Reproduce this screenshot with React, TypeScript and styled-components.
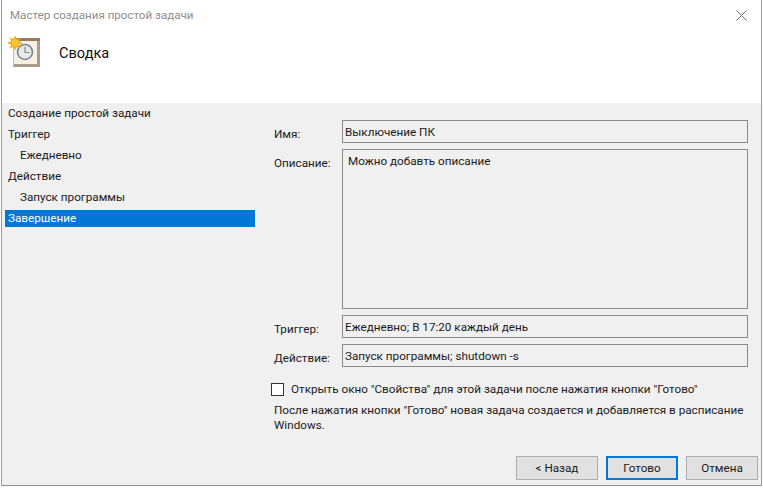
import React from 'react'
import styled, { createGlobalStyle } from 'styled-components'

const GlobalStyle = createGlobalStyle`
  html, body {
    margin: 0;
    padding: 0;
    background: #ffffff;
  }
  body {
    font-family: Roboto, 'Noto Sans', sans-serif;
    font-size: 11.7px;
    color: #1a1a1a;
  }
`

const Page = styled.div`
  width: 763px;
  height: 489px;
  overflow: hidden;
  background: #ffffff;
`

const Window = styled.div`
  width: 761px;
  height: 486px;
  margin-left: 1px;
  box-sizing: border-box;
  border-left: 1px solid #9a9a9a;
  border-right: 1px solid #a0a0a0;
  border-bottom: 1px solid #8f8f8f;
  display: flex;
  flex-direction: column;
`

const TitleBar = styled.div`
  height: 30px;
  padding: 0 14px 0 8px;
  display: flex;
  align-items: center;
  justify-content: space-between;
  flex-shrink: 0;
`

const TitleText = styled.span`
  color: #8e8e8e;
  font-size: 11.6px;
`

const Header = styled.div`
  height: 73px;
  flex-shrink: 0;
  display: flex;
  align-items: flex-start;
  padding: 6px 0 0 6px;
  box-sizing: border-box;
  gap: 18px;
`

const Heading = styled.h1`
  margin: 8px 0 0;
  font-size: 14.6px;
  line-height: 19px;
  font-weight: 400;
  color: #111111;
`

const Body = styled.div`
  flex: 1;
  display: flex;
  flex-direction: column;
  background: #f0f0f0;
  min-height: 0;
`

const Columns = styled.div`
  flex: 1;
  display: flex;
  min-height: 0;
`

const Steps = styled.ul`
  list-style: none;
  margin: 0;
  padding: 2px 0 0 3px;
  width: 250px;
  flex-shrink: 0;
`

const Step = styled.li<{ $sub?: boolean; $active?: boolean }>`
  height: 17px;
  line-height: 16px;
  margin-bottom: 4px;
  padding-left: ${p => (p.$sub ? '15px' : '3px')};
  background: ${p => (p.$active ? '#0078d7' : 'transparent')};
  color: ${p => (p.$active ? '#ffffff' : '#1a1a1a')};
  white-space: nowrap;
`

const Form = styled.div`
  flex: 1;
  padding: 17px 13px 0 19px;
  display: flex;
  flex-direction: column;
  min-width: 0;
`

const FieldRow = styled.div<{ $tall?: boolean }>`
  display: grid;
  grid-template-columns: 68px 1fr;
  height: ${p => (p.$tall ? '160px' : '23px')};
  margin-bottom: 6px;
`

const FieldLabel = styled.label`
  padding-top: 6px;
  line-height: 16px;
  white-space: nowrap;
`

const FieldValue = styled.div<{ $tall?: boolean }>`
  box-sizing: border-box;
  border: 1px solid #8a8a8a;
  background: #f0f0f0;
  line-height: 16px;
  padding: ${p => (p.$tall ? '3px 0 0 5px' : '3px 0 0 2px')};
  white-space: nowrap;
`

const CheckRow = styled.label`
  display: flex;
  align-items: center;
  gap: 7px;
  margin: 8px 0 0 -3px;
  height: 16px;
  white-space: nowrap;
`

const CheckBox = styled.span`
  width: 13px;
  height: 13px;
  box-sizing: border-box;
  border: 1px solid #333333;
  background: #ffffff;
  flex-shrink: 0;
`

const Note = styled.p`
  margin: 6px 0 0;
  line-height: 14.5px;
  width: 470px;
`

const Footer = styled.div`
  height: 29px;
  padding-right: 3px;
  flex-shrink: 0;
  display: flex;
  justify-content: flex-end;
  gap: 8px;
`

const Button = styled.button<{ $primary?: boolean; $w: number }>`
  width: ${p => p.$w}px;
  height: 24px;
  box-sizing: border-box;
  border: ${p => (p.$primary ? '2px solid #0078d7' : '1px solid #adadad')};
  background: #e1e1e1;
  font: inherit;
  color: #1a1a1a;
  padding: 0;
`

const steps = [
  { text: 'Создание простой задачи' },
  { text: 'Триггер' },
  { text: 'Ежедневно', sub: true },
  { text: 'Действие' },
  { text: 'Запуск программы', sub: true },
  { text: 'Завершение', active: true },
]

const TaskIcon = () => (
  <svg width="33" height="32" viewBox="0 0 33 32">
    <rect x="5.5" y="3.5" width="26" height="27" fill="#f7f0e3" stroke="#c8bba8" />
    <rect x="7" y="2" width="25" height="3" fill="#9c7862" />
    <rect x="29" y="5" width="3" height="26" fill="#a99c8c" />
    <rect x="6" y="28" width="26" height="3" fill="#a99c8c" />
    <circle cx="17" cy="16" r="7.5" fill="#e4e9ec" stroke="#76858d" strokeWidth="1.6" />
    <path d="M17 11v5.5h4.5" fill="none" stroke="#9b8a68" strokeWidth="1.2" />
    <g stroke="#f2a414" strokeWidth="1.3">
      <path d="M7 0v14M0 7h14M2 2l10 10M12 2L2 12" />
    </g>
    <circle cx="7" cy="7" r="4.4" fill="#fcc630" stroke="#ef9d14" />
  </svg>
)

const CloseIcon = () => (
  <svg width="11" height="11" viewBox="0 0 11 11">
    <path d="M0.5 0.5l10 10M10.5 0.5l-10 10" stroke="#6f6f6f" strokeWidth="1" fill="none" />
  </svg>
)

export default function App() {
  return (
    <Page>
      <GlobalStyle />
      <Window>
        <TitleBar>
          <TitleText>Мастер создания простой задачи</TitleText>
          <CloseIcon />
        </TitleBar>
        <Header>
          <TaskIcon />
          <Heading>Сводка</Heading>
        </Header>
        <Body>
          <Columns>
            <Steps>
              {steps.map(s => (
                <Step key={s.text} $sub={s.sub} $active={s.active}>
                  {s.text}
                </Step>
              ))}
            </Steps>
            <Form>
              <FieldRow>
                <FieldLabel>Имя:</FieldLabel>
                <FieldValue>Выключение ПК</FieldValue>
              </FieldRow>
              <FieldRow $tall>
                <FieldLabel>Описание:</FieldLabel>
                <FieldValue $tall>Можно добавть описание</FieldValue>
              </FieldRow>
              <FieldRow>
                <FieldLabel>Триггер:</FieldLabel>
                <FieldValue>Ежедневно; В 17:20 каждый день</FieldValue>
              </FieldRow>
              <FieldRow>
                <FieldLabel>Действие:</FieldLabel>
                <FieldValue>Запуск программы; shutdown -s</FieldValue>
              </FieldRow>
              <CheckRow>
                <CheckBox />
                Открыть окно "Свойства" для этой задачи после нажатия кнопки "Готово"
              </CheckRow>
              <Note>
                После нажатия кнопки "Готово" новая задача создается и добавляется в расписание Windows.
              </Note>
            </Form>
          </Columns>
          <Footer>
            <Button $w={82}>&lt; Назад</Button>
            <Button $w={72} $primary>Готово</Button>
            <Button $w={72}>Отмена</Button>
          </Footer>
        </Body>
      </Window>
    </Page>
  )
}
